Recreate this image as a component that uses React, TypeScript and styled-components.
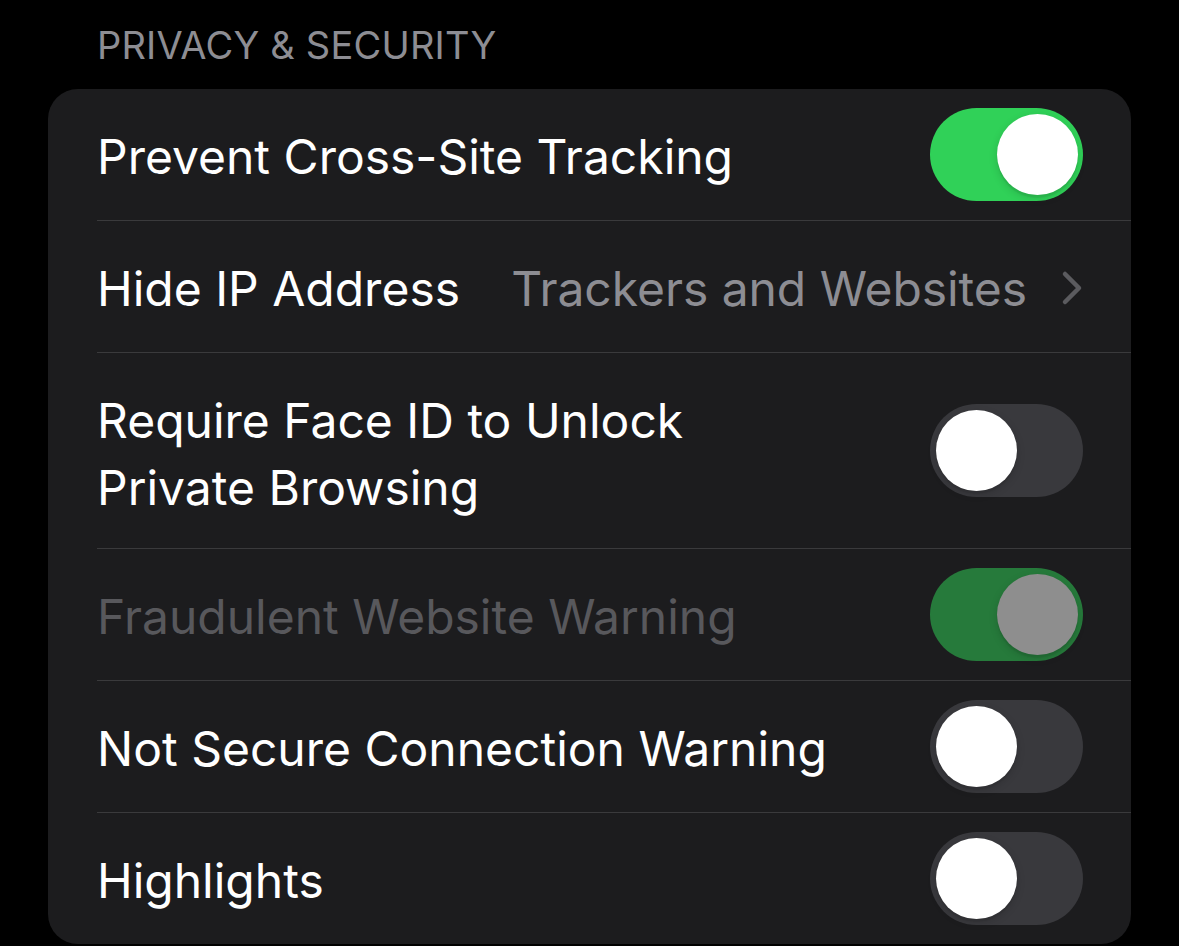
import * as React from 'react'
import styled, { createGlobalStyle } from 'styled-components'

const GlobalStyle = createGlobalStyle`
  html, body {
    margin: 0;
    padding: 0;
    background: #000;
  }
  body {
    font-family: Inter, "Noto Sans", "Liberation Sans", sans-serif;
    -webkit-font-smoothing: antialiased;
  }
`

const Page = styled.div`
  width: 1179px;
  height: 946px;
  overflow: hidden;
  background: #000;
`

const SectionHeader = styled.div`
  height: 89px;
  box-sizing: border-box;
  padding: 22px 0 0 97px;
  font-size: 38px;
  line-height: 46px;
  letter-spacing: 0.2px;
  color: #8d8d93;
`

const Card = styled.div`
  margin-left: 48px;
  width: 1083px;
  background: #1c1c1e;
  border-radius: 30px;
  overflow: hidden;
`

const Row = styled.div<{ $tall?: boolean }>`
  display: flex;
  align-items: center;
  justify-content: space-between;
  height: ${(p) => (p.$tall ? 195 : 131)}px;
  margin-left: 49px;
  padding-right: 48px;
  border-top: 1px solid #3a3a3c;

  &:first-child {
    border-top: none;
  }
`

const Label = styled.div<{ $disabled?: boolean; $tall?: boolean }>`
  padding-top: ${(p) => (p.$tall ? 7 : 3)}px;
  font-size: 48px;
  line-height: 67px;
  color: ${(p) => (p.$disabled ? '#58585c' : '#fff')};
`

const Detail = styled.div`
  display: flex;
  align-items: center;
  gap: 34px;
  padding-top: 3px;
  font-size: 48px;
  letter-spacing: -0.05px;
  color: #8d8d93;
`

const Track = styled.div<{ $on: boolean; $disabled?: boolean }>`
  position: relative;
  flex: none;
  width: 153px;
  height: 93px;
  border-radius: 47px;
  background: ${(p) => (p.$on ? (p.$disabled ? '#267a3b' : '#30d158') : '#39393d')};
`

const Knob = styled.div<{ $on: boolean; $disabled?: boolean }>`
  position: absolute;
  top: 6px;
  left: ${(p) => (p.$on ? 67 : 6)}px;
  width: 81px;
  height: 81px;
  border-radius: 50%;
  background: ${(p) => (p.$disabled ? '#8e8e8e' : '#fff')};
  box-shadow: 0 3px 8px rgba(0, 0, 0, 0.15), 0 3px 1px rgba(0, 0, 0, 0.06);
`

const Toggle = ({ on, disabled }: { on: boolean; disabled?: boolean }) => (
  <Track $on={on} $disabled={disabled}>
    <Knob $on={on} $disabled={disabled} />
  </Track>
)

const Chevron = () => (
  <svg width="22" height="36" viewBox="0 0 22 36" fill="none">
    <path d="M4 4 L18 18 L4 32" stroke="#5b5b5f" strokeWidth="4.5" strokeLinecap="round" strokeLinejoin="round" />
  </svg>
)

export default function App() {
  return (
    <Page>
      <GlobalStyle />
      <SectionHeader>PRIVACY &amp; SECURITY</SectionHeader>
      <Card>
        <Row>
          <Label>Prevent Cross-Site Tracking</Label>
          <Toggle on />
        </Row>
        <Row>
          <Label>Hide IP Address</Label>
          <Detail>
            Trackers and Websites
            <Chevron />
          </Detail>
        </Row>
        <Row $tall>
          <Label $tall>
            Require Face ID to Unlock
            <br />
            Private Browsing
          </Label>
          <Toggle on={false} />
        </Row>
        <Row>
          <Label $disabled>Fraudulent Website Warning</Label>
          <Toggle on disabled />
        </Row>
        <Row>
          <Label>Not Secure Connection Warning</Label>
          <Toggle on={false} />
        </Row>
        <Row>
          <Label>Highlights</Label>
          <Toggle on={false} />
        </Row>
      </Card>
    </Page>
  )
}
